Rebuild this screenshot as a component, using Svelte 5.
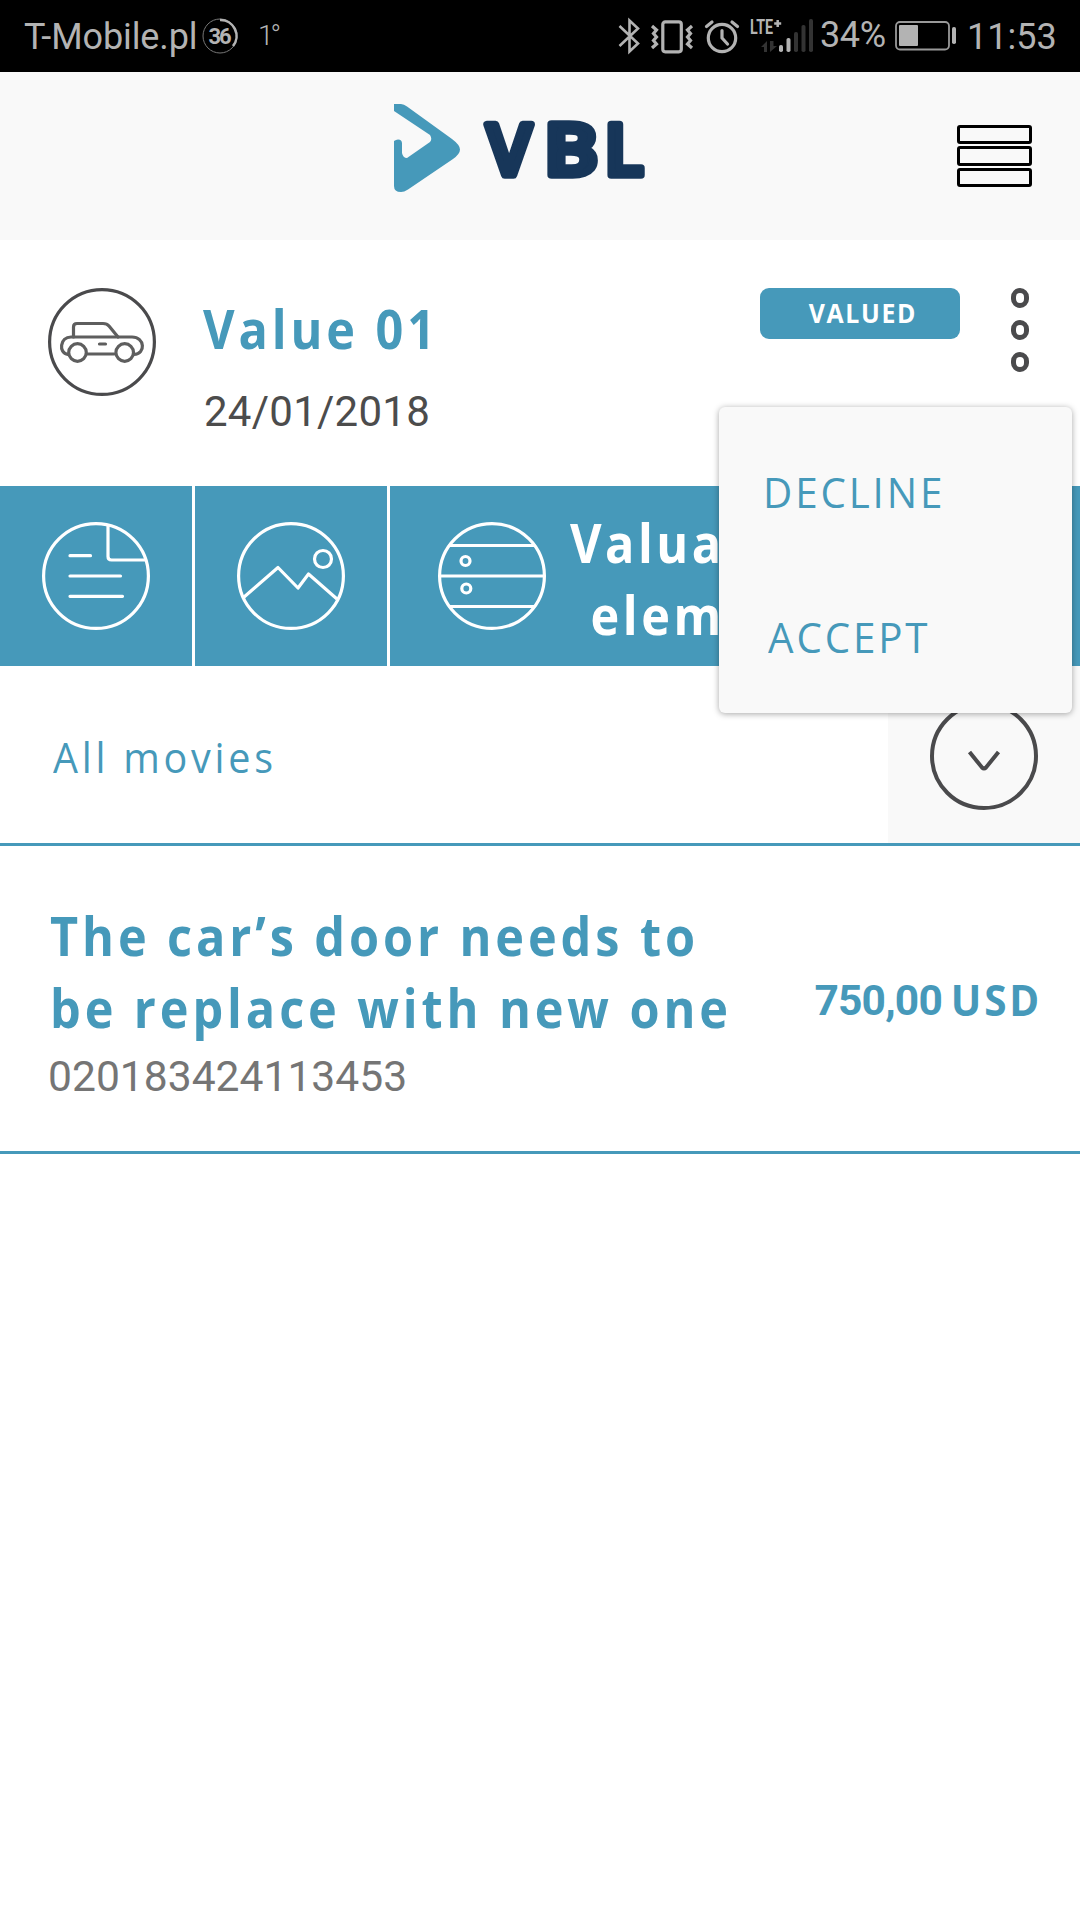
<script lang="ts">
  interface MenuItem {
    id: string;
    label: string;
  }

  const menuItems: MenuItem[] = [
    { id: 'decline', label: 'DECLINE' },
    { id: 'accept', label: 'ACCEPT' },
  ];

  const bars = [
    { x: 32, y: 26, on: true },
    { x: 39.5, y: 19, on: true },
    { x: 47, y: 13, on: false },
    { x: 54.5, y: 6, on: false },
    { x: 62, y: 0, on: false },
  ];

  let menuOpen = $state(true);
</script>

<div class="screen">
  <div class="status-bar">
    <span class="carrier">T-Mobile.pl</span>
    <svg class="speed" width="36" height="36" viewBox="0 0 36 36">
      <circle cx="18" cy="18" r="17" fill="none" stroke="#777" stroke-width="1" />
      <path d="M18 2a16 16 0 0 1 13 26" fill="none" stroke="#b3b3b3" stroke-width="2.6" />
      <text x="18" y="26" text-anchor="middle" textLength="23">36</text>
    </svg>
    <span class="temp">1°</span>

    <div class="status-icons">
      <svg class="bluetooth" width="22" height="36" viewBox="0 0 22 36">
        <path d="M1.500 8 20 25.500 11.500 33.500V2.500L20 10.500 1.500 28" />
      </svg>
      <svg class="vibrate" width="42" height="34" viewBox="0 0 42 34">
        <rect x="11.800" y="1.800" width="18.500" height="30" rx="2.500" />
        <path d="M1 6l4.500 4-3 3.500 3 3.500-3 3.500 3 3.500L1 28M41 6l-4.500 4 3 3.500-3 3.500 3 3.500-3 3.500L41 28" />
      </svg>
      <svg class="alarm" width="34" height="34" viewBox="0 0 34 34">
        <circle cx="17" cy="18" r="13.700" />
        <path d="M17 10.500V18l5.500 6M1.500 6.500 7 2M32.500 6.500 27 2" />
      </svg>
      <svg class="signal" width="66" height="34" viewBox="0 0 66 34">
        <text x="0" y="15" textLength="23" lengthAdjust="spacingAndGlyphs">LTE</text>
        <path class="plus" d="M27.700 1v7M24.200 4.500h7" />
        <path class="arrows" d="M11 28l6-6v11h-3v-5zM20 22v11l7-6h-3.500v-5z" />
        {#each bars as bar}
          <rect class:on={bar.on} x={bar.x - 3} y={bar.y} width="4" height={33 - bar.y} rx="1.800" />
        {/each}
      </svg>
      <span class="percent">34%</span>
      <svg class="battery" width="62" height="30" viewBox="0 0 62 30">
        <rect x="1" y="1" width="53" height="27.500" rx="4" fill="none" stroke="#999" stroke-width="1.800" />
        <rect x="4" y="4" width="19" height="21" rx="1" fill="#b3b3b3" />
        <rect x="57" y="6" width="4" height="17" rx="1.800" fill="#b3b3b3" />
      </svg>
      <span class="clock">11:53</span>
    </div>
  </div>

  <header class="header">
    <svg class="logo" width="256" height="90" viewBox="0 0 256 90">
      <path
        fill="#4699ba"
        d="M0 0h7q3 0 6 2.500L58 35q8 6 8 10.500T59 55L14 85.500Q10 88 7 88q-7 0-7-6V37q2-1.500 4-1.500 4 0 4 4V49q1 5 5 5L36 38q2.500-3 0-7L0 7z"
      />
      <text y="71"><tspan x="93">V</tspan><tspan x="150" textLength="54" lengthAdjust="spacingAndGlyphs">B</tspan><tspan x="210.500">L</tspan></text>
    </svg>
    <button class="hamburger" aria-label="Menu">
      <span></span>
      <span></span>
      <span></span>
    </button>
  </header>

  <section class="summary">
    <svg class="car" width="108" height="108" viewBox="0 0 108 108">
      <circle cx="54" cy="54" r="52.400" stroke="#4a4a4c" />
      <g stroke="#5e5e5e">
        <path d="M20 66.500C10 65 12 49 23 49H84C97 49 98 66 86 66.500" />
        <path d="M25.500 49V39q0-3.500 3.500-3.500H55q4 0 6 2.500L70 49M40 66h26M51.500 56h6" />
        <circle cx="29.500" cy="64.500" r="8.800" />
        <circle cx="76.700" cy="64.500" r="8.800" />
      </g>
    </svg>
    <div class="summary-text">
      <h1>Value 01</h1>
      <time>24/01/2018</time>
    </div>
    <span class="badge"><span>VALUED</span></span>
    <button class="more" aria-label="More" onclick={() => (menuOpen = !menuOpen)}>
      <span></span>
      <span></span>
      <span></span>
    </button>

    {#if menuOpen}
      <div class="menu" role="menu">
        {#each menuItems as item (item.id)}
          <button class="menu-item {item.id}" role="menuitem"><span>{item.label}</span></button>
        {/each}
      </div>
    {/if}
  </section>

  <nav class="tabs">
    <button class="tab" aria-label="Document">
      <svg width="108" height="108" viewBox="0 0 108 108">
        <circle cx="54" cy="54" r="52.400" />
        <path d="M66 4V34.500q0 3.500 3.500 3.500H103M28 33.700H48.500M28 54H78.500M28 74.300H80.500" />
      </svg>
    </button>
    <button class="tab" aria-label="Photos">
      <svg width="108" height="108" viewBox="0 0 108 108">
        <circle cx="54" cy="54" r="52.400" />
        <path d="M6.500 75.500 41 45.500 61 66 71.500 52 100 77" stroke-linecap="butt" />
        <circle cx="86" cy="37" r="8.500" />
      </svg>
    </button>
    <button class="tab wide">
      <svg width="108" height="108" viewBox="0 0 108 108">
        <circle cx="54" cy="54" r="52.400" />
        <path d="M12 23.500H96M2 54H106M12 84.500H96" />
        <circle cx="27.500" cy="39" r="4.500" />
        <circle cx="28.300" cy="66.500" r="4.500" />
      </svg>
      <span class="tab-label">Valua<br />elem</span>
    </button>
  </nav>

  <div class="filter">
    <span class="filter-label">All movies</span>
    <button class="filter-toggle" aria-label="Expand">
      <svg width="108" height="108" viewBox="0 0 108 108">
        <circle cx="54" cy="54" r="52" />
        <path d="M39.500 50 52 65.500q2 2 4 0L68.500 50" />
      </svg>
    </button>
  </div>

  <article class="item">
    <div class="item-text">
      <h2>The car’s door needs to<br />be replace with new one</h2>
      <p>020183424113453</p>
    </div>
    <div class="price"><span class="amount">750,00</span><span class="currency">USD</span></div>
  </article>
</div>

<style>
  :global(body) {
    background: #fff;
  }

  .screen {
    width: 1080px;
    height: 1920px;
    overflow: hidden;
    background: #fff;
    color: #4699ba;
    font-family: 'Open Sans', 'Noto Sans', sans-serif;
  }

  button {
    margin: 0;
    padding: 0;
    border: 0;
    background: none;
    color: inherit;
    font: inherit;
    letter-spacing: inherit;
    cursor: pointer;
  }

  svg {
    display: block;
    flex: none;
    overflow: visible;
  }

  h1,
  h2,
  p {
    margin: 0;
  }

  .status-bar {
    display: flex;
    height: 72px;
    padding: 0 26px 0 24px;
    background: #000;
    color: #b3b3b3;
    font-family: Roboto, sans-serif;
    font-size: 36px;
    line-height: 42px;
    white-space: nowrap;
  }

  .carrier {
    width: 178px;
    padding-top: 16px;
    letter-spacing: -0.1px;
  }

  .speed {
    margin-top: 18px;
  }

  .speed text {
    fill: #b3b3b3;
    font-size: 22px;
    font-weight: 700;
  }

  .temp {
    margin-left: 20px;
    padding-top: 15px;
    font-size: 28px;
    font-weight: 300;
    letter-spacing: -3px;
  }

  .status-icons {
    display: flex;
    margin-left: auto;
    fill: none;
    stroke: #b3b3b3;
  }

  .bluetooth {
    margin: 18px 11px 0 0;
    stroke-width: 2.6;
  }

  .vibrate {
    margin: 20px 12px 0 0;
    stroke-width: 3.2;
  }

  .alarm {
    margin: 20px 11px 0 0;
    stroke-width: 3.2;
    stroke-linecap: round;
  }

  .signal {
    margin: 19px 4px 0 0;
    stroke: none;
    fill: #333;
  }

  .signal text {
    fill: #b3b3b3;
    font-size: 21px;
    font-weight: 700;
  }

  .signal .plus {
    stroke: #b3b3b3;
    stroke-width: 2.5;
  }

  .signal .on {
    fill: #b3b3b3;
  }

  .percent {
    width: 75px;
    padding-top: 14px;
    letter-spacing: -0.4px;
  }

  .battery {
    margin: 21px 10px 0 0;
    stroke: none;
  }

  .clock {
    width: 87px;
    padding-top: 16px;
    font-size: 36px;
  }

  .header {
    display: flex;
    align-items: flex-start;
    height: 168px;
    background: #f9f9f9;
  }

  .logo {
    margin: 32px 0 0 394px;
  }

  .logo text {
    fill: #173659;
    stroke: #173659;
    stroke-width: 7.5px;
    stroke-linejoin: round;
    font-size: 71px;
    font-weight: 600;
  }

  .hamburger {
    display: grid;
    gap: 2px;
    width: 75px;
    margin: 53px 48px 0 auto;
  }

  .hamburger span {
    height: 13px;
    border: 3px solid #000;
    border-radius: 3px;
  }

  .hamburger span:nth-child(2) {
    height: 14px;
  }

  .summary {
    position: relative;
    display: flex;
    align-items: flex-start;
    height: 246px;
    padding: 0 51px 0 48px;
    box-sizing: border-box;
  }

  .car,
  .tab svg {
    fill: none;
    stroke-width: 3.2;
    stroke-linecap: round;
    stroke-linejoin: round;
  }

  .car {
    margin-top: 48px;
  }

  .summary-text {
    display: flex;
    flex-direction: column;
    margin: 52px auto 0 47px;
  }

  h1,
  h2,
  .tab-label {
    font-size: 54px;
    line-height: 72px;
    font-weight: 700;
    letter-spacing: 4.35px;
    white-space: nowrap;
    transform: scaleX(0.9);
    transform-origin: left;
  }

  time {
    margin: 23px 0 0 1px;
    color: #4c4c4c;
    font-family: Roboto, sans-serif;
    font-size: 42px;
    line-height: 50px;
    letter-spacing: 0.25px;
  }

  .badge {
    width: 200px;
    height: 51px;
    margin-top: 48px;
    border-radius: 9px;
    background: #4699ba;
    color: #fff;
    font-size: 27px;
    line-height: 50px;
    font-weight: 700;
    letter-spacing: 1.8px;
    text-align: center;
  }

  .badge span {
    display: inline-block;
    margin-left: 6px;
    transform: scaleX(0.92);
  }

  .more {
    display: grid;
    gap: 12px;
    margin: 48px 0 0 51px;
  }

  .more span {
    width: 8px;
    height: 10px;
    border: 5px solid #4a4a4c;
    border-radius: 9px;
  }

  .menu {
    position: absolute;
    top: 167px;
    right: 8px;
    z-index: 10;
    display: flex;
    flex-direction: column;
    gap: 73px;
    width: 353px;
    height: 306px;
    padding-top: 48px;
    border-radius: 6px;
    box-sizing: border-box;
    background: #f9f9f9;
    box-shadow: 0 1px 6px rgba(0, 0, 0, 0.35);
  }

  .menu-item {
    flex: none;
    height: 72px;
    padding-left: 44px;
    font-size: 42px;
    letter-spacing: 3px;
    text-align: left;
  }

  .menu-item span {
    display: inline-block;
    transform: scaleX(0.96);
    transform-origin: left;
  }

  .menu-item.accept {
    padding-left: 49px;
  }

  .tabs {
    display: flex;
    gap: 3px;
    height: 180px;
    overflow: hidden;
  }

  .tab {
    display: flex;
    flex: none;
    align-items: center;
    justify-content: center;
    width: 192px;
    background: #4699ba;
    color: #fff;
  }

  .tab svg {
    stroke: #fff;
  }

  .tab.wide {
    flex: 1;
    justify-content: flex-start;
    padding-left: 48px;
  }

  .tab-label {
    margin: 4px 0 0 24px;
    letter-spacing: 3.9px;
    text-align: right;
  }

  .filter {
    display: flex;
    justify-content: space-between;
    height: 177px;
    border-bottom: 3px solid #4699ba;
  }

  .filter-label {
    padding: 63px 0 0 53px;
    font-size: 42px;
    line-height: 56px;
    letter-spacing: 4px;
    transform: scaleX(0.94);
    transform-origin: 53px 0;
  }

  .filter-toggle {
    display: flex;
    justify-content: center;
    width: 192px;
    padding-top: 36px;
    background: #f9f9f9;
  }

  .filter-toggle svg {
    fill: none;
    stroke: #4a4a4c;
    stroke-width: 4;
  }

  .item {
    display: flex;
    justify-content: space-between;
    height: 305px;
    padding: 0 38px 0 50px;
    border-bottom: 3px solid #4699ba;
  }

  .item-text {
    padding-top: 53px;
  }

  .item p {
    margin: 8px 0 0 -2px;
    color: #757575;
    font-family: Roboto, sans-serif;
    font-size: 42.6px;
    line-height: 50px;
  }

  .price {
    display: flex;
    gap: 3px;
    padding-top: 126px;
    font-size: 43px;
    line-height: 56px;
    font-weight: 700;
  }

  .amount {
    padding-top: 1px;
    font-family: Roboto, sans-serif;
    font-size: 42.5px;
    letter-spacing: -0.8px;
  }

  .currency {
    letter-spacing: 3px;
    transform: scaleX(0.94);
    transform-origin: right;
  }
</style>
